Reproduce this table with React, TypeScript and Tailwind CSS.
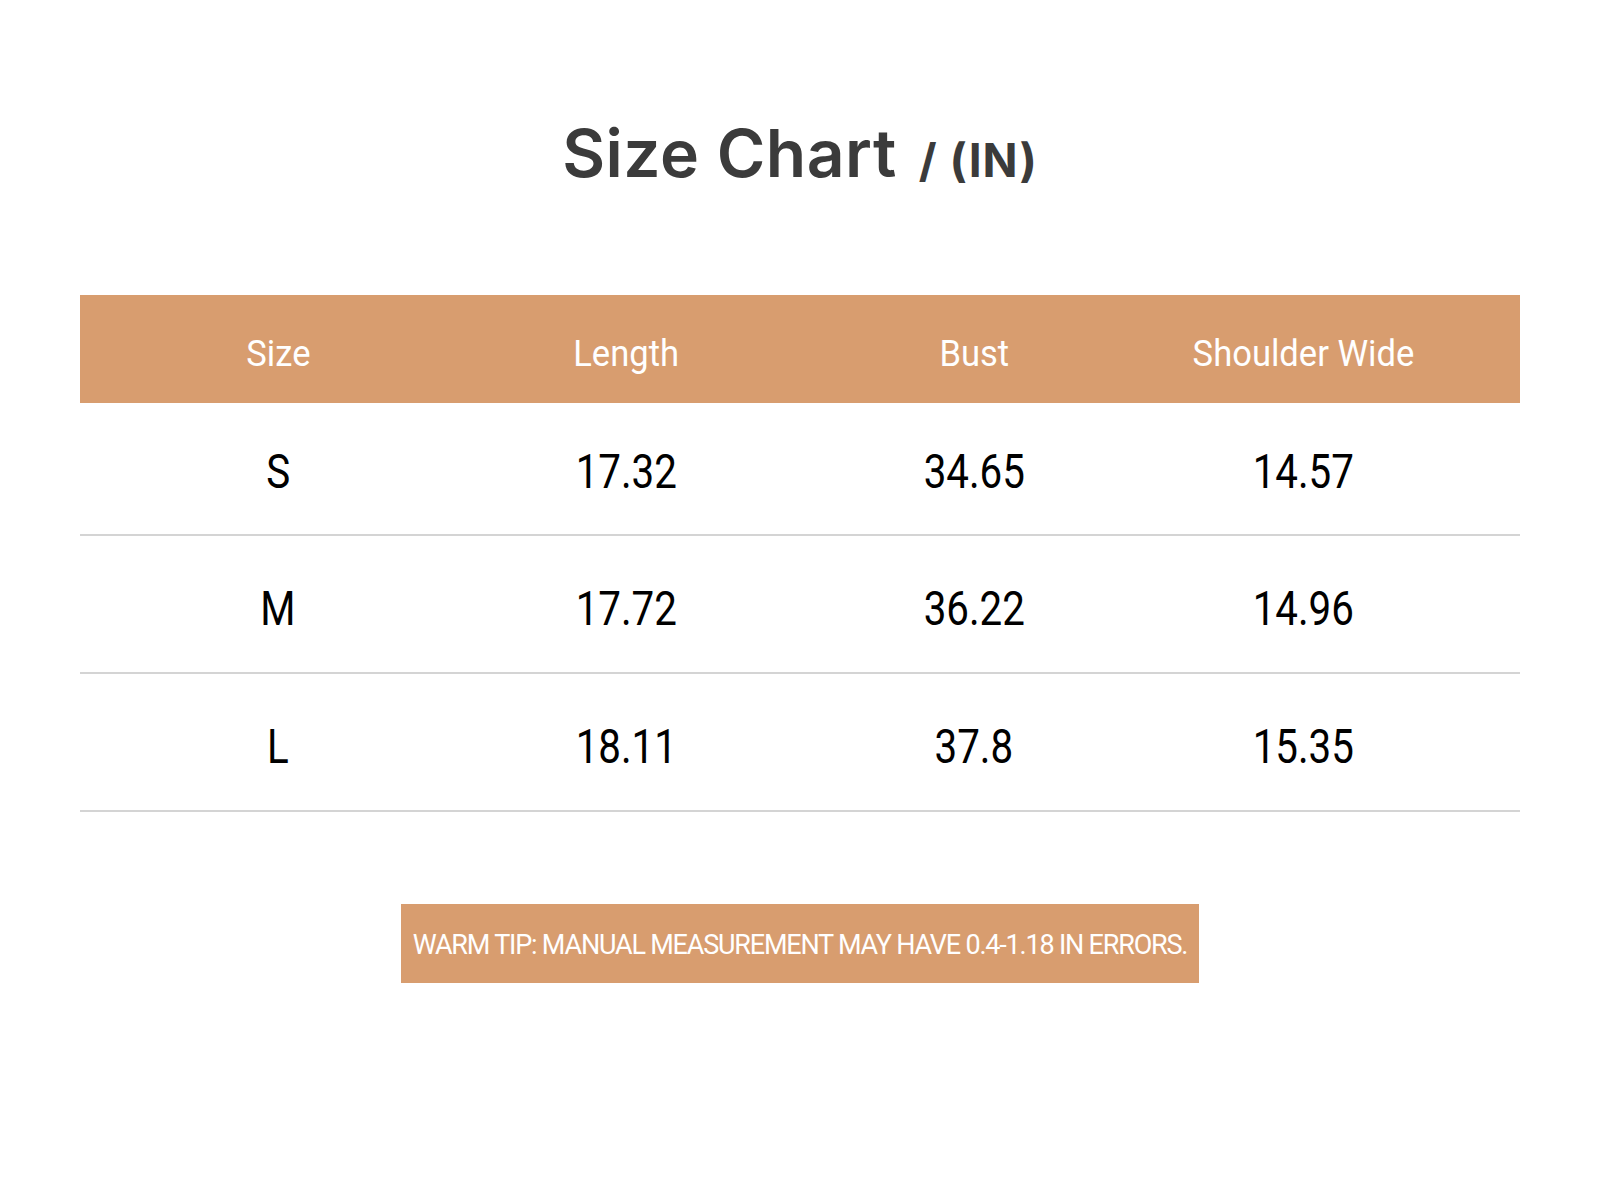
const headers = ["Size", "Length", "Bust", "Shoulder Wide"];

const rows = [
  { size: "S", length: "17.32", bust: "34.65", shoulder: "14.57", h: "h-[133px]", pt: "pt-[6px]" },
  { size: "M", length: "17.72", bust: "36.22", shoulder: "14.96", h: "h-[138px]", pt: "pt-[10px]" },
  { size: "L", length: "18.11", bust: "37.8", shoulder: "15.35", h: "h-[138px]", pt: "pt-[10px]" },
];

const font = "font-['Roboto',sans-serif]";

export default function App() {
  return (
    <div className="min-h-[1200px] w-[1600px] bg-white">
      {/* Title */}
      <div className="flex items-baseline justify-center pt-[120px] font-['Inter',sans-serif] text-[#3b3b3b]">
        <h1 className="text-[66px] font-semibold leading-none tracking-[0.5px]">
          Size Chart
        </h1>
        <span className="ml-[22px] text-[46px] font-bold leading-none tracking-[1px]">
          / (IN)
        </span>
      </div>

      {/* Table */}
      <div className={`mx-auto mt-[109px] w-[1440px] ${font}`}>
        <div className="grid h-[108px] grid-cols-[396px_300px_396px_262px_1fr] items-center bg-[#d89d6f] pt-[10px] text-[36px] text-white">
          {headers.map((h) => (
            <div key={h} className="text-center">
              <span className="inline-block scale-x-[0.96]">{h}</span>
            </div>
          ))}
        </div>
        {rows.map((r) => (
          <div
            key={r.size}
            className={`grid ${r.h} ${r.pt} grid-cols-[396px_300px_396px_262px_1fr] items-center border-b-2 border-[#d4d4d4] text-[48px] text-black`}
          >
            {[r.size, r.length, r.bust, r.shoulder].map((v, i) => (
              <div key={i} className="text-center">
                <span className="inline-block scale-x-[0.84]">{v}</span>
              </div>
            ))}
          </div>
        ))}
      </div>

      {/* Warm tip */}
      <div className="mt-[92px] flex justify-center">
        <div
          className={`flex h-[79px] w-[798px] items-center justify-center bg-[#d89d6f] pt-[3px] text-[27px] whitespace-nowrap text-white tracking-[-1.2px] ${font}`}
        >
          WARM TIP: MANUAL MEASUREMENT MAY HAVE 0.4-1.18 IN ERRORS.
        </div>
      </div>
    </div>
  );
}
